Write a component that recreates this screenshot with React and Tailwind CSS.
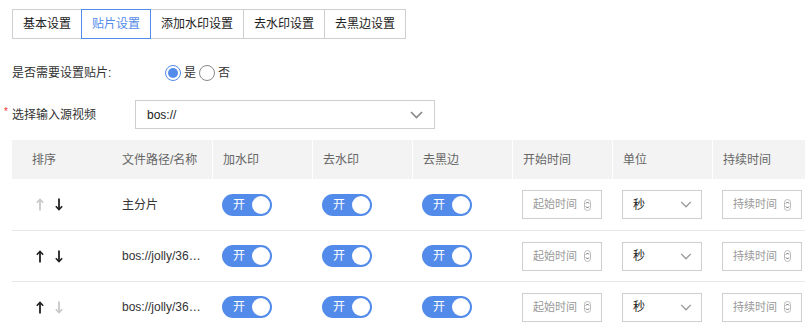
import React from "react";

function Toggle() {
  return (
    <div className="relative w-[50px] h-[22px] rounded-full bg-[#528bea] flex items-center">
      <span className="ml-[11px] text-[12px] leading-none text-white">开</span>
      <span className="absolute right-[2px] top-[2px] w-[18px] h-[18px] rounded-full bg-white" />
    </div>
  );
}

function Spinner() {
  return (
    <svg width="7" height="12" viewBox="0 0 7 12" className="shrink-0">
      <rect x="0.5" y="0.5" width="6" height="11" rx="3" fill="none" stroke="#bbb" strokeWidth="1" />
      <path d="M2 4.5 L3.5 3 L5 4.5" fill="none" stroke="#555" strokeWidth="0.9" />
      <path d="M2 7.5 L3.5 9 L5 7.5" fill="none" stroke="#555" strokeWidth="0.9" />
    </svg>
  );
}

function NumInput({ placeholder }) {
  return (
    <div className="w-[80px] h-[29px] border border-[#cfcfcf] flex items-center pl-[10px] pr-[10px] justify-between">
      <span className="text-[11px] text-[#999]">{placeholder}</span>
      <Spinner />
    </div>
  );
}

function Chevron({ w = 13, h = 8, color = "#888" }) {
  return (
    <svg width={w} height={h} viewBox="0 0 13 8">
      <path d="M1 1 L6.5 6.5 L12 1" fill="none" stroke={color} strokeWidth="1.6" />
    </svg>
  );
}

function UnitSelect() {
  return (
    <div className="w-[80px] h-[29px] border border-[#cfcfcf] flex items-center pl-[10px] pr-[9px] justify-between">
      <span className="text-[12px] text-[#222]">秒</span>
      <Chevron w={12} h={7} color="#999" />
    </div>
  );
}

function Arrow({ dir, active }) {
  const c = active ? "#222" : "#c8c8c8";
  return (
    <svg width="8" height="13" viewBox="0 0 8 13">
      {dir === "up" ? (
        <>
          <path d="M4 1.5 L4 12.5" stroke={c} strokeWidth="1.8" />
          <path d="M0.8 4.8 L4 1.5 L7.2 4.8" fill="none" stroke={c} strokeWidth="1.6" />
        </>
      ) : (
        <>
          <path d="M4 0.5 L4 11.5" stroke={c} strokeWidth="1.8" />
          <path d="M0.8 8.2 L4 11.5 L7.2 8.2" fill="none" stroke={c} strokeWidth="1.6" />
        </>
      )}
    </svg>
  );
}

const headers = ["排序", "文件路径/名称", "加水印", "去水印", "去黑边", "开始时间", "单位", "持续时间"];

const rows = [
  { up: false, down: true, name: "主分片" },
  { up: true, down: true, name: "bos://jolly/36…" },
  { up: true, down: false, name: "bos://jolly/36…" },
];

export default function App() {
  const tabs = [
    { t: "基本设置", w: "w-[70px]" },
    { t: "贴片设置", w: "w-[70px]", active: true },
    { t: "添加水印设置", w: "w-[94px]" },
    { t: "去水印设置", w: "w-[82px]" },
    { t: "去黑边设置", w: "w-[82px]" },
  ];
  return (
    <div className="w-[805px] h-[332px] overflow-hidden bg-white pl-[12px] font-['Liberation_Sans','Noto_Sans_CJK_SC',sans-serif] text-[12px] text-[#333]">
      {/* Tabs */}
      <div className="flex pt-[9px]">
        {tabs.map((tab, i) => (
          <div
            key={i}
            className={`${tab.w} h-[30px] flex items-center justify-center border ${i > 0 ? "-ml-px" : ""} ${
              tab.active ? "relative z-10 border-[#528bea] text-[#528bea]" : "border-[#cfcfcf] text-[#222]"
            }`}
          >
            {tab.t}
          </div>
        ))}
      </div>

      {/* Radio row */}
      <div className="flex items-center h-[16px] mt-[26px]">
        <span className="w-[153px] text-[#333]">是否需要设置贴片:</span>
        <span className="w-[16px] h-[16px] rounded-full border border-[#528bea] flex items-center justify-center">
          <span className="w-[10px] h-[10px] rounded-full bg-[#528bea]" />
        </span>
        <span className="ml-[3px] text-[#333]">是</span>
        <span className="ml-[3px] w-[16px] h-[16px] rounded-full border border-[#888]" />
        <span className="ml-[3px] text-[#333]">否</span>
      </div>

      {/* Select row */}
      <div className="flex items-center mt-[19px] h-[29px]">
        <span className="relative w-[123px] text-[#333]">
          <span className="absolute -left-[8px] -top-[2px] text-[#e33] text-[10px]">*</span>
          选择输入源视频
        </span>
        <div className="w-[300px] h-[29px] border border-[#cfcfcf] flex items-center justify-between pl-[11px] pr-[11px]">
          <span className="text-[#222]">bos://</span>
          <Chevron w={13} h={8} color="#888" />
        </div>
      </div>

      {/* Table */}
      <div className="mt-[11px] w-[800px]">
        <div className="flex h-[39px] bg-[#f3f3f3] text-[#666]">
          {headers.map((h, i) => (
            <div
              key={i}
              className={`w-[100px] shrink-0 flex items-center ${i === 0 ? "pl-[20px]" : "pl-[10px]"} ${
                i >= 2 ? "border-l border-white" : ""
              }`}
            >
              {h}
            </div>
          ))}
        </div>
        {rows.map((r, ri) => (
          <div key={ri} className={`flex h-[51px] items-center ${ri > 0 ? "border-t border-[#e8e8e8]" : ""}`}>
            <div className="w-[100px] shrink-0 pl-[24px] flex items-center gap-[11px]">
              <Arrow dir="up" active={r.up} />
              <Arrow dir="down" active={r.down} />
            </div>
            <div className="w-[100px] shrink-0 pl-[10px] whitespace-nowrap text-[#333]">{r.name}</div>
            <div className="w-[100px] shrink-0 pl-[10px]"><Toggle /></div>
            <div className="w-[100px] shrink-0 pl-[10px]"><Toggle /></div>
            <div className="w-[100px] shrink-0 pl-[10px]"><Toggle /></div>
            <div className="w-[100px] shrink-0 pl-[10px]"><NumInput placeholder="起始时间" /></div>
            <div className="w-[100px] shrink-0 pl-[10px]"><UnitSelect /></div>
            <div className="w-[100px] shrink-0 pl-[10px]"><NumInput placeholder="持续时间" /></div>
          </div>
        ))}
      </div>
    </div>
  );
}
